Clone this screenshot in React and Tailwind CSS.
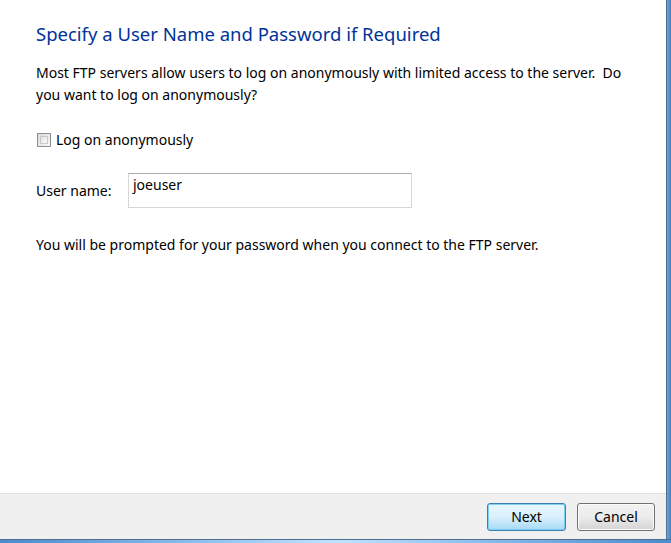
import React from 'react';

const font = { fontFamily: '"Noto Sans", "Open Sans", sans-serif' };

// Windows 7 style wizard page: FTP credentials
function WizardBody() {
  return (
    <div className="flex-1 bg-white pl-[36px] pt-[20px] text-[#000000]">
      <h1 className="text-[18.5px] leading-[28px] text-[#003399]">
        Specify a User Name and Password if Required
      </h1>

      <p className="mt-[14px] w-[600px] text-[14px] leading-[22px]">
        Most FTP servers allow users to log on anonymously with limited access to the server.&nbsp; Do you want to log on anonymously?
      </p>

      <label className="mt-[24px] flex items-center gap-[5px] text-[14px] leading-[20px]">
        <span className="ml-[1px] h-[14px] w-[14px] border border-[#8f8f8f] bg-gradient-to-br from-[#dcdcdc] to-[#f8f8f8] p-[2px]">
          <span className="block h-full w-full border border-[#c8c8c8] bg-gradient-to-br from-[#e0e0e0] to-[#fbfbfb]" />
        </span>
        Log on anonymously
      </label>

      <div className="mt-[23px] flex items-center">
        <span className="w-[92px] text-[14px] leading-[20px]">User name:</span>
        <div className="h-[35px] w-[284px] border border-[#d6d6d6] border-t-[#ababab] px-[4px] pt-[1px] text-[14px] leading-[20px]">
          joeuser
        </div>
      </div>

      <p className="mt-[27px] text-[14px] leading-[20px]">
        You will be prompted for your password when you connect to the FTP server.
      </p>
    </div>
  );
}

function Footer() {
  return (
    <div className="flex h-[46px] items-center justify-end gap-[11px] border-t border-[#dfdfdf] bg-[#f0f0f0] pr-[11px] text-[14px]">
      <button className="h-[28px] w-[79px] rounded-[3px] border border-[#3c7fb1] bg-gradient-to-b from-[#eaf6fd] via-[#d9f0fc] to-[#a7d9f5] text-black shadow-[inset_0_0_0_1px_#7bd0f5]">
        Next
      </button>
      <button className="h-[28px] w-[78px] rounded-[3px] border border-[#707070] bg-gradient-to-b from-[#f2f2f2] via-[#ebebeb] to-[#d4d4d4] text-black shadow-[inset_0_0_0_1px_#fcfcfc]">
        Cancel
      </button>
    </div>
  );
}

export default function App() {
  return (
    <div className="flex h-[543px] w-[671px] flex-col overflow-hidden" style={font}>
      <div className="flex min-h-0 flex-1">
        <div className="flex flex-1 flex-col">
          <WizardBody />
          <Footer />
        </div>
        <div className="w-[5px] border-l border-[#4f6f8f] bg-gradient-to-r from-[#6fa6d6] to-[#3f7fbf]" />
      </div>
      <div className="h-[4px] border-t border-[#4f6f8f] bg-gradient-to-r from-[#4a8ccc] via-[#bfe4ff] to-[#4a8ccc]" />
    </div>
  );
}
